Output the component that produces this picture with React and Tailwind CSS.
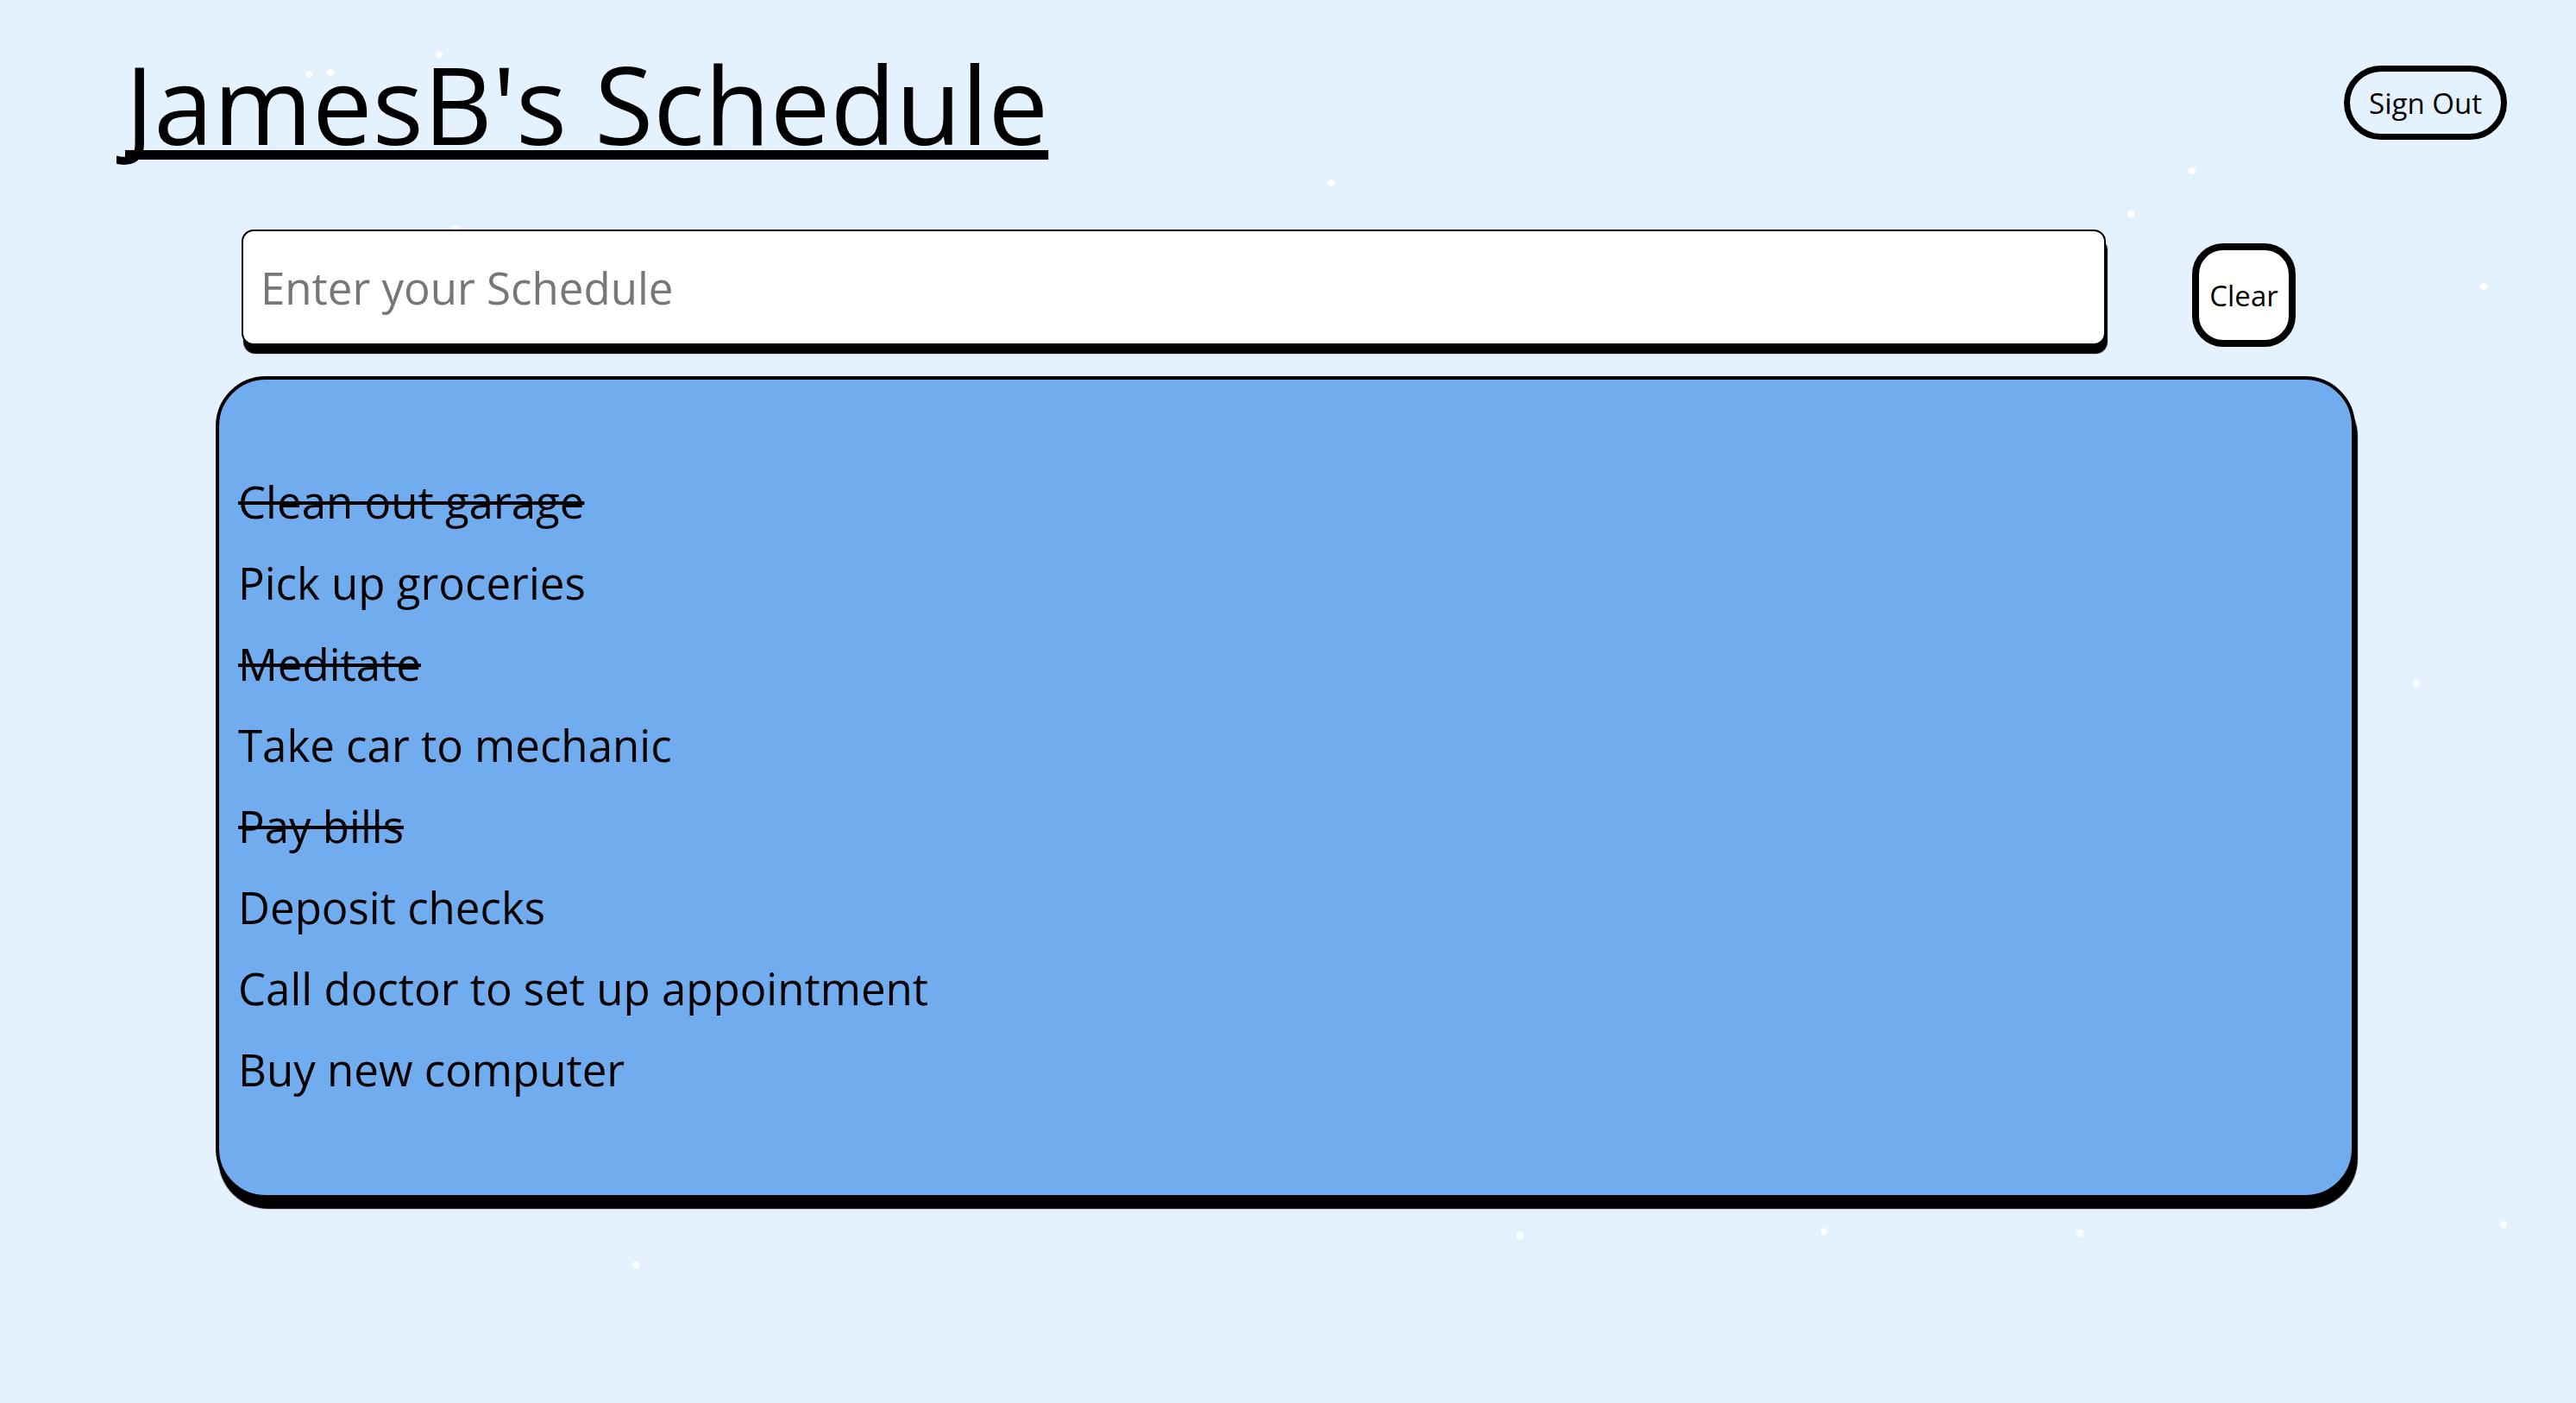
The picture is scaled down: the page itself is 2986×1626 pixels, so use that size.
import React, { useState } from 'react';

const DOTS = [
  [379, 80], [354, 82], [505, 59], [1539, 208], [2537, 194], [2466, 244], [2875, 328],
  [2797, 788], [1758, 1428], [2110, 1423], [2407, 1425], [2898, 1415], [733, 1462], [524, 261],
];

const INITIAL = [
  { text: 'Clean out garage', done: true },
  { text: 'Pick up groceries', done: false },
  { text: 'Meditate', done: true },
  { text: 'Take car to mechanic', done: false },
  { text: 'Pay bills', done: true },
  { text: 'Deposit checks', done: false },
  { text: 'Call doctor to set up appointment', done: false },
  { text: 'Buy new computer', done: false },
];

function App() {
  const [items, setItems] = useState(INITIAL);
  const [entry, setEntry] = useState('');

  const toggle = (i) => {
    setItems(prev => prev.map((it, idx) => (idx === i ? { ...it, done: !it.done } : it)));
  };

  const addItem = (e) => {
    if (e.key === 'Enter' && entry.trim()) {
      setItems(prev => [...prev, { text: entry.trim(), done: false }]);
      setEntry('');
    }
  };

  return (
    <div className="relative min-h-screen overflow-hidden bg-[#e4f1fe] text-black font-['Open_Sans',sans-serif]">
      {DOTS.map(([x, y], i) => (
        <span
          key={i}
          className="absolute w-[8px] h-[8px] rounded-full bg-white"
          style={{ left: x, top: y }}
        />
      ))}

      <header className="relative flex justify-between items-start pl-[145px] pr-[80px]">
        <h1 className="mt-[58px] text-[124px] leading-none font-normal underline decoration-[11px] underline-offset-[6px] [text-decoration-skip-ink:none]">
          JamesB's Schedule
        </h1>
        <button className="mt-[76px] w-[189px] h-[86px] rounded-full border-[7px] border-black text-[33px] leading-none">
          Sign Out
        </button>
      </header>

      <div className="relative flex items-start gap-[100px] ml-[280px] mt-[84px]">
        <input
          type="text"
          value={entry}
          onChange={(e) => setEntry(e.target.value)}
          onKeyDown={addItem}
          placeholder="Enter your Schedule"
          className="w-[2161px] h-[134px] pl-[20px] bg-white border-2 border-black rounded-[14px] shadow-[2px_10px_1px_#000] text-[51px] placeholder:text-[#777777] outline-none"
        />
        <button
          onClick={() => setItems([])}
          className="mt-[16px] w-[120px] h-[120px] bg-white border-[8px] border-black rounded-[36px] text-[33px] leading-none"
        >
          Clear
        </button>
      </div>

      <div className="relative ml-[250px] mt-[34px] w-[2480px] h-[953px] bg-[#71acee] border-4 border-black rounded-[58px] shadow-[3px_12px_1px_#000] pt-[94px] pl-[22px]">
        <ul>
          {items.map((it, i) => (
            <li
              key={i}
              onClick={() => toggle(i)}
              className={`text-[51px] leading-[94px] cursor-pointer ${it.done ? 'line-through decoration-[4px]' : ''}`}
            >
              {it.text}
            </li>
          ))}
        </ul>
      </div>
    </div>
  );
}

export default App;
